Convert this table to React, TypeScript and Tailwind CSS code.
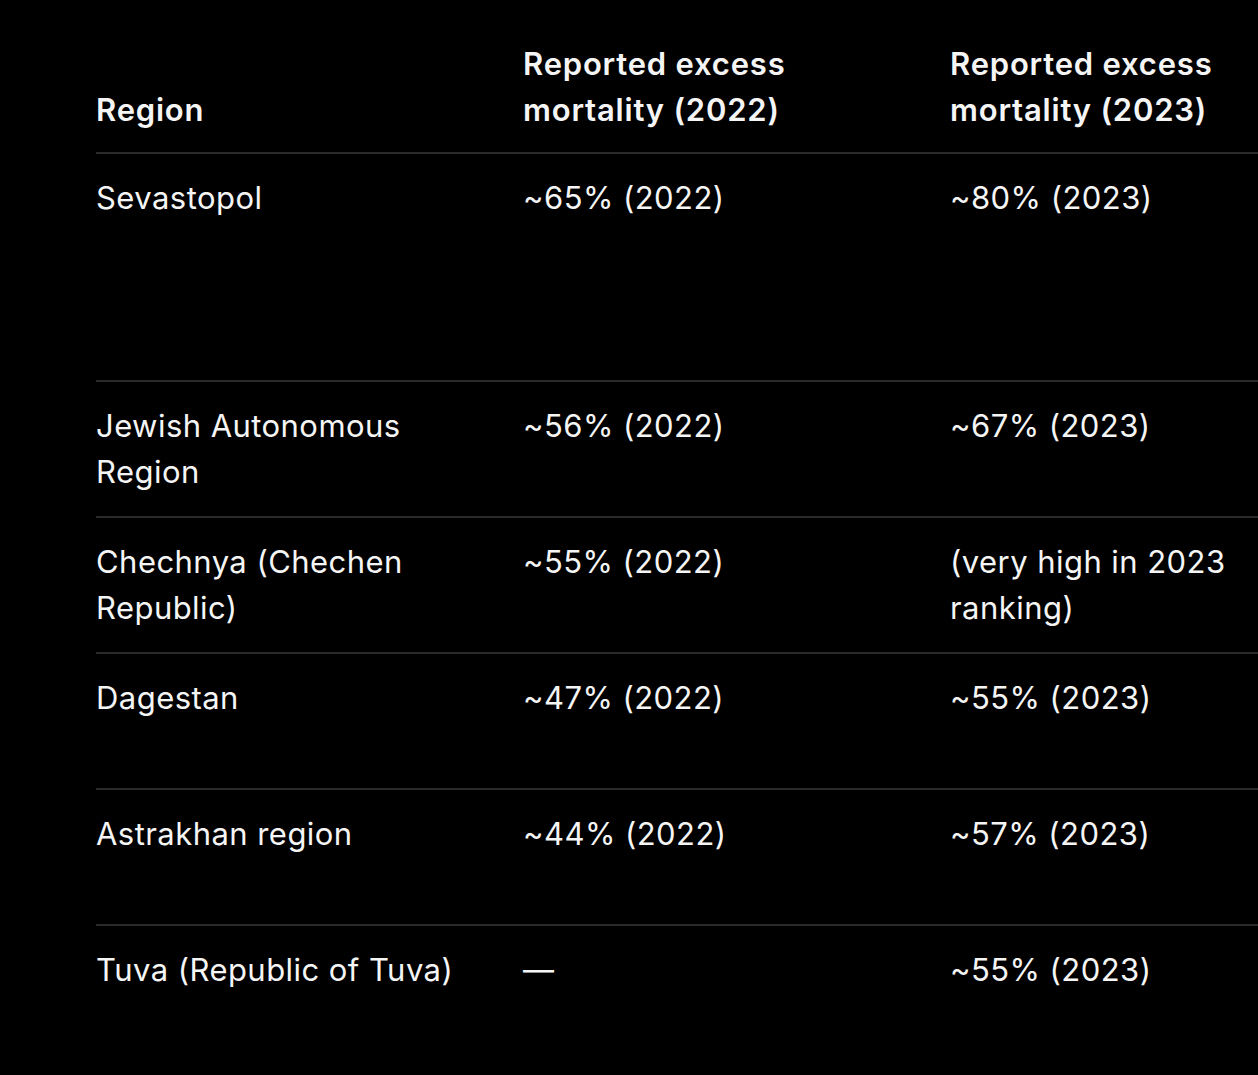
import React from 'react';

type Row = { region: string; y2022: string; y2023: string; lines: number };

const rows: Row[] = [
  { region: 'Sevastopol', y2022: '~65% (2022)', y2023: '~80% (2023)', lines: 4 },
  { region: 'Jewish Autonomous Region', y2022: '~56% (2022)', y2023: '~67% (2023)', lines: 2 },
  { region: 'Chechnya (Chechen Republic)', y2022: '~55% (2022)', y2023: '(very high in 2023 ranking)', lines: 2 },
  { region: 'Dagestan', y2022: '~47% (2022)', y2023: '~55% (2023)', lines: 2 },
  { region: 'Astrakhan region', y2022: '~44% (2022)', y2023: '~57% (2023)', lines: 2 },
  { region: 'Tuva (Republic of Tuva)', y2022: '—', y2023: '~55% (2023)', lines: 2 },
];

const cell = 'w-[427px] shrink-0 pr-[45px]';

export default function App() {
  return (
    <div
      className="min-h-[1075px] w-full overflow-hidden bg-black pl-[96px] pt-[41px] text-[31px] leading-[46px] tracking-[0.45px] text-[#f5f5f5] antialiased"
      style={{ fontFamily: 'Inter, "Noto Sans", sans-serif' }}
    >
      {/* Header */}
      <div className="flex items-end pb-[19px] font-semibold tracking-[0.8px]">
        <div className={cell}>Region</div>
        <div className={cell}>Reported excess mortality (2022)</div>
        <div className={cell}>Reported excess mortality (2023)</div>
      </div>

      {/* Body */}
      {rows.map((r) => (
        <div key={r.region} className="flex border-t-2 border-[#2a2a2a] pt-[21px] pb-[21px]">
          <div className={`${cell} ${r.lines === 4 ? 'min-h-[184px]' : 'min-h-[92px]'}`}>{r.region}</div>
          <div className={cell}>{r.y2022}</div>
          <div className={cell}>{r.y2023}</div>
        </div>
      ))}
    </div>
  );
}
